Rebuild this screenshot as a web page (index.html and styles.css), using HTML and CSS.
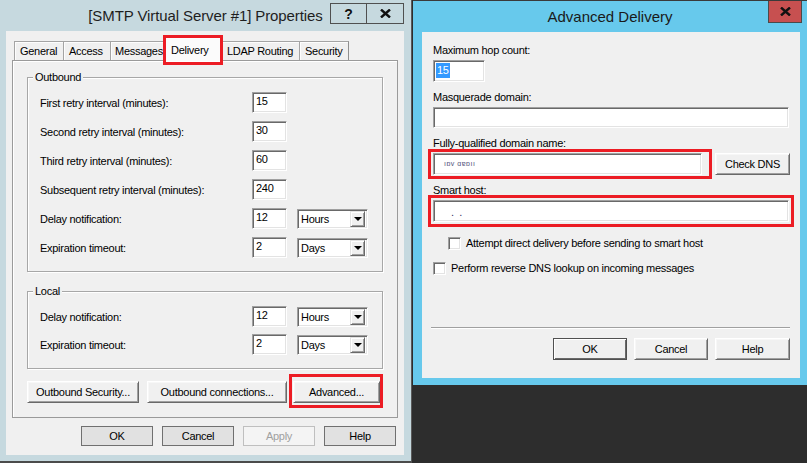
FILE: index.html
```html
<!DOCTYPE html>
<html>
<head>
<meta charset="utf-8">
<title>SMTP Properties</title>
<link rel="stylesheet" href="styles.css">
</head>
<body>
<div class="desktop">
  <section class="win win-left">
    <header class="titlebar">
      <div class="title">[SMTP Virtual Server #1] Properties</div>
      <div class="caption-btns">
        <span class="cbtn help">?</span>
        <span class="cbtn close"><svg width="11" height="9" viewBox="0 0 11 9"><path d="M1 0.5 L10 8.5 M10 0.5 L1 8.5" stroke="#111" stroke-width="2.4"/></svg></span>
      </div>
    </header>
    <div class="client">
      <div class="tabs">
        <div class="tab t-general">General</div>
        <div class="tab t-access">Access</div>
        <div class="tab t-messages">Messages</div>
        <div class="tab t-delivery active">Delivery</div>
        <div class="tab t-ldap">LDAP Routing</div>
        <div class="tab t-security">Security</div>
      </div>
      <div class="panel">
        <div class="group">
          <span class="group-title">Outbound</span>
          <div class="form-grid outbound">
            <span class="lbl">First retry interval (minutes):</span><span class="edit num">15</span><span></span>
            <span class="lbl">Second retry interval (minutes):</span><span class="edit num">30</span><span></span>
            <span class="lbl">Third retry interval (minutes):</span><span class="edit num">60</span><span></span>
            <span class="lbl">Subsequent retry interval (minutes):</span><span class="edit num">240</span><span></span>
            <span class="lbl">Delay notification:</span><span class="edit num">12</span><span class="combo"><span class="combo-text">Hours</span><span class="combo-btn"><span class="arrow"></span></span></span>
            <span class="lbl">Expiration timeout:</span><span class="edit num">2</span><span class="combo"><span class="combo-text">Days</span><span class="combo-btn"><span class="arrow"></span></span></span>
          </div>
        </div>
        <div class="group local">
          <span class="group-title">Local</span>
          <div class="form-grid localgrid">
            <span class="lbl">Delay notification:</span><span class="edit num">12</span><span class="combo"><span class="combo-text">Hours</span><span class="combo-btn"><span class="arrow"></span></span></span>
            <span class="lbl">Expiration timeout:</span><span class="edit num">2</span><span class="combo"><span class="combo-text">Days</span><span class="combo-btn"><span class="arrow"></span></span></span>
          </div>
        </div>
        <div class="panel-btns">
          <span class="btn raised b-sec">Outbound Security...</span>
          <span class="btn raised b-conn">Outbound connections...</span>
          <span class="btn raised b-adv">Advanced...</span>
        </div>
      </div>
      <div class="dlg-btns">
        <span class="btn flat">OK</span>
        <span class="btn flat">Cancel</span>
        <span class="btn flat disabled">Apply</span>
        <span class="btn flat">Help</span>
      </div>
    </div>
  </section>

  <section class="win win-right">
    <header class="titlebar rt">
      <div class="title">Advanced Delivery</div>
      <span class="cbtn close red"><svg width="11" height="9" viewBox="0 0 11 9"><path d="M1 0.5 L10 8.5 M10 0.5 L1 8.5" stroke="#111" stroke-width="2.4"/></svg></span>
    </header>
    <div class="client rclient">
      <span class="rlbl first">Maximum hop count:</span>
      <span class="edit hop"><span class="sel">15</span></span>
      <span class="rlbl">Masquerade domain:</span>
      <span class="edit wide"></span>
      <span class="rlbl">Fully-qualified domain name:</span>
      <div class="fqdn-row">
        <span class="edit fqdn"><span class="blur">ıɒv ɑɐɒıı</span></span>
        <span class="btn raised b-dns">Check DNS</span>
      </div>
      <span class="rlbl">Smart host:</span>
      <span class="edit wide smart"><span class="dots">.&nbsp;&nbsp;.</span></span>
      <label class="chk-row indent"><span class="chk"></span>Attempt direct delivery before sending to smart host</label>
      <label class="chk-row second"><span class="chk"></span>Perform reverse DNS lookup on incoming messages</label>
      <div class="sep"></div>
      <div class="rbtns">
        <span class="btn raised default">OK</span>
        <span class="btn raised">Cancel</span>
        <span class="btn raised b-help">Help</span>
      </div>
    </div>
  </section>

  <div class="hl hl-tab"></div>
  <div class="hl hl-adv"></div>
  <div class="hl hl-fqdn"></div>
  <div class="hl hl-smart"></div>
</div>
</body>
</html>
```

FILE: styles.css
```css
* { box-sizing: border-box; }
html, body { margin: 0; padding: 0; }
body {
  width: 807px;
  height: 463px;
  overflow: hidden;
  background: #2d2d2d;
  font-family: "Liberation Sans", Arial, sans-serif;
  font-size: 11px;
  letter-spacing: -0.28px;
  color: #000;
}
.desktop { position: relative; width: 807px; height: 463px; }

/* windows on the desktop */
.win { position: absolute; top: 0; display: flex; flex-direction: column; }
.win-left {
  left: 0;
  width: 412px;
  height: 463px;
  background: #c6d9df;
  border-right: 1px solid #5a5a5a;
  border-bottom: 2px solid #4b4b4b;
}
.win-right {
  left: 413px;
  width: 394px;
  height: 385px;
  background: #67c9ec;
  border-top: 1px solid #3a3a3a;
}

/* title bars */
.titlebar { height: 31px; display: grid; align-items: start; flex: none; }
.titlebar > * { grid-area: 1 / 1; }
.title {
  justify-self: center;
  margin-top: 7px;
  font-size: 15px;
  line-height: 18px;
  letter-spacing: -0.1px;
  color: #1e1e1e;
}
.caption-btns { justify-self: end; margin: 3px 7px 0 0; display: flex; }
.cbtn {
  height: 21px;
  border: 1px solid #505050;
  display: flex;
  align-items: center;
  justify-content: center;
  font-weight: bold;
  font-size: 14px;
  letter-spacing: 0;
  color: #111;
}
.cbtn.help { width: 36px; border-right: none; }
.cbtn.close { width: 38px; }
.rt .title { margin-top: 7px; color: #1a1a1a; letter-spacing: 0; }
.cbtn.red {
  justify-self: end;
  width: 34px;
  height: 22px;
  margin: 0 5px 0 0;
  background: #c75050;
  border-color: #4a4a4a;
  border-top: none;
}

/* client area */
.client {
  background: #f0f0f0;
  margin: 0 7px 6px 6px;
  width: 398px;
  height: 424px;
  display: flex;
  flex-direction: column;
}

/* tabs */
.tabs {
  height: 29px;
  display: flex;
  align-items: flex-end;
  padding-left: 8px;
  flex: none;
}
.tab {
  height: 19px;
  border: 1px solid #a4a4a4;
  border-bottom: none;
  border-right: none;
  box-shadow: inset 1px 1px #fdfdfd;
  background: #f0f0f0;
  padding: 3px 0 0 5px;
  line-height: 13px;
  white-space: nowrap;
  overflow: hidden;
}
.t-general { width: 49px; }
.t-access { width: 47px; }
.t-messages { width: 55px; padding-left: 4px; }
.t-delivery { width: 60px; }
.t-ldap { width: 78px; }
.t-security { width: 50px; border-right: 1px solid #8f8f8f; }
.tab.active {
  height: 24px;
  margin: 0 -2px -1px -2px;
  padding: 6px 0 0 7px;
  background: #fbfbfb;
  border-right: 1px solid #8f8f8f;
  position: relative;
  z-index: 1;
}

.panel {
  margin-left: 6px;
  width: 386px;
  height: 358px;
  border: 1px solid #9a9a9a;
  box-shadow: inset 1px 1px #fff;
  padding: 16px 0 0 14px;
  display: flex;
  flex-direction: column;
  flex: none;
}

/* group boxes */
.group {
  width: 356px;
  border: 1px solid #a7a7a7;
  box-shadow: inset 1px 1px #fff, 1px 1px #fff;
  padding: 0 0 13px 12px;
}
.group.local { margin-top: 19px; }
.group-title {
  display: block;
  width: max-content;
  height: 13px;
  line-height: 13px;
  margin: -7px 0 8px -7px;
  padding: 0 2px;
  background: #f0f0f0;
}
.form-grid {
  display: grid;
  grid-template-columns: 212px 45px 71px;
  align-items: center;
}
.form-grid.outbound { row-gap: 8px; }
.form-grid.localgrid { row-gap: 7px; }
.lbl { padding-top: 1px; white-space: nowrap; }

/* sunken edit */
.edit {
  display: block;
  background: #fff;
  border: 1px solid;
  border-color: #a0a0a0 #fff #fff #a0a0a0;
  box-shadow: inset 1px 1px #696969, inset -1px -1px #e3e3e3;
  line-height: 13px;
  padding: 2px 0 0 3px;
  white-space: nowrap;
  overflow: hidden;
}
.edit.num { height: 21px; width: 35px; }

.combo {
  display: flex;
  height: 20px;
  background: #fff;
  border: 1px solid;
  border-color: #a0a0a0 #fff #fff #a0a0a0;
  box-shadow: inset 1px 1px #696969, inset -1px -1px #e3e3e3;
  padding: 2px 2px 2px 3px;
  align-items: center;
}
.combo-text { flex: 1; padding-top: 1px; }
.combo-btn {
  width: 15px;
  height: 16px;
  background: #f0f0f0;
  border: 1px solid;
  border-color: #e3e3e3 #696969 #696969 #e3e3e3;
  box-shadow: inset 1px 1px #fff, inset -1px -1px #a0a0a0;
  display: flex;
  align-items: center;
  justify-content: center;
}
.arrow {
  width: 0;
  height: 0;
  border-left: 4px solid transparent;
  border-right: 4px solid transparent;
  border-top: 4px solid #000;
  margin-top: 1px;
}

/* buttons */
.btn {
  display: flex;
  align-items: center;
  justify-content: center;
  white-space: nowrap;
  flex: none;
}
.btn.raised {
  height: 22px;
  background: #f0f0f0;
  border: 1px solid;
  border-color: #fff #696969 #696969 #fff;
  box-shadow: inset 1px 1px #f7f7f7, inset -1px -1px #a0a0a0;
}
.panel-btns { display: flex; margin-top: 12px; }
.b-sec { width: 112px; }
.b-conn { width: 140px; margin-left: 8px; }
.b-adv { width: 87px; margin-left: 6px; }

.dlg-btns {
  display: flex;
  justify-content: flex-end;
  gap: 9px;
  margin: 8px 8px 0 0;
}
.btn.flat {
  width: 72px;
  height: 20px;
  background: #e1e1e1;
  border: 1px solid #707070;
}
.btn.flat.disabled {
  background: #f4f4f4;
  border-color: #bfbfbf;
  color: #a0a0a0;
}

/* right dialog */
.rclient {
  margin: 0 7px 7px 9px;
  width: 378px;
  height: 346px;
  padding: 12px 10px 0 11px;
}
.rlbl { display: block; line-height: 13px; height: 13px; margin: 9px 0 3px; white-space: nowrap; }
.rlbl.first { margin-top: 0; }
.edit.hop { width: 52px; height: 22px; padding: 3px 0 0 2px; }
.sel { background: #3399ff; color: #fff; padding: 1px 1px 2px 1px; }
.edit.wide { width: 356px; height: 21px; }
.edit.smart { height: 22px; }
.fqdn-row { display: flex; gap: 13px; }
.edit.fqdn { width: 269px; height: 22px; }
.blur {
  display: inline-block;
  color: #50507a;
  font-size: 7px;
  line-height: 8px;
  letter-spacing: 0.5px;
  margin: 1px 0 0 7px;
}
.dots { color: #333366; margin-left: 14px; display: inline-block; margin-top: 3px; }
.b-dns { width: 75px; height: 22px; }

.chk-row { display: flex; align-items: center; gap: 5px; height: 14px; line-height: 13px; white-space: nowrap; }
.chk-row.indent { margin: 14px 0 0 15px; }
.chk-row.second { margin-top: 11px; }
.chk {
  width: 13px;
  height: 13px;
  background: #fff;
  border: 1px solid;
  border-color: #a0a0a0 #fff #fff #a0a0a0;
  box-shadow: inset 1px 1px #696969, inset -1px -1px #e3e3e3;
  flex: none;
}
.sep {
  margin: 52px 0 0 -2px;
  width: 359px;
  height: 2px;
  border-top: 1px solid #a0a0a0;
  border-bottom: 1px solid #fff;
}
.rbtns { display: flex; justify-content: flex-end; gap: 7px; margin-top: 9px; }
.rbtns .btn { width: 74px; }
.rbtns .b-help { width: 75px; }
.btn.raised.default {
  border-color: #505050;
  box-shadow: inset 1px 1px #fff, inset -1px -1px #696969;
}

/* red annotation boxes over the screenshot */
.hl { position: absolute; border: 3px solid #ec1c24; z-index: 5; }
.hl-tab { left: 163px; top: 35px; width: 60px; height: 30px; }
.hl-adv { left: 289px; top: 374px; width: 94px; height: 34px; }
.hl-fqdn { left: 428px; top: 149px; width: 284px; height: 30px; }
.hl-smart { left: 428px; top: 195px; width: 366px; height: 32px; }
```
